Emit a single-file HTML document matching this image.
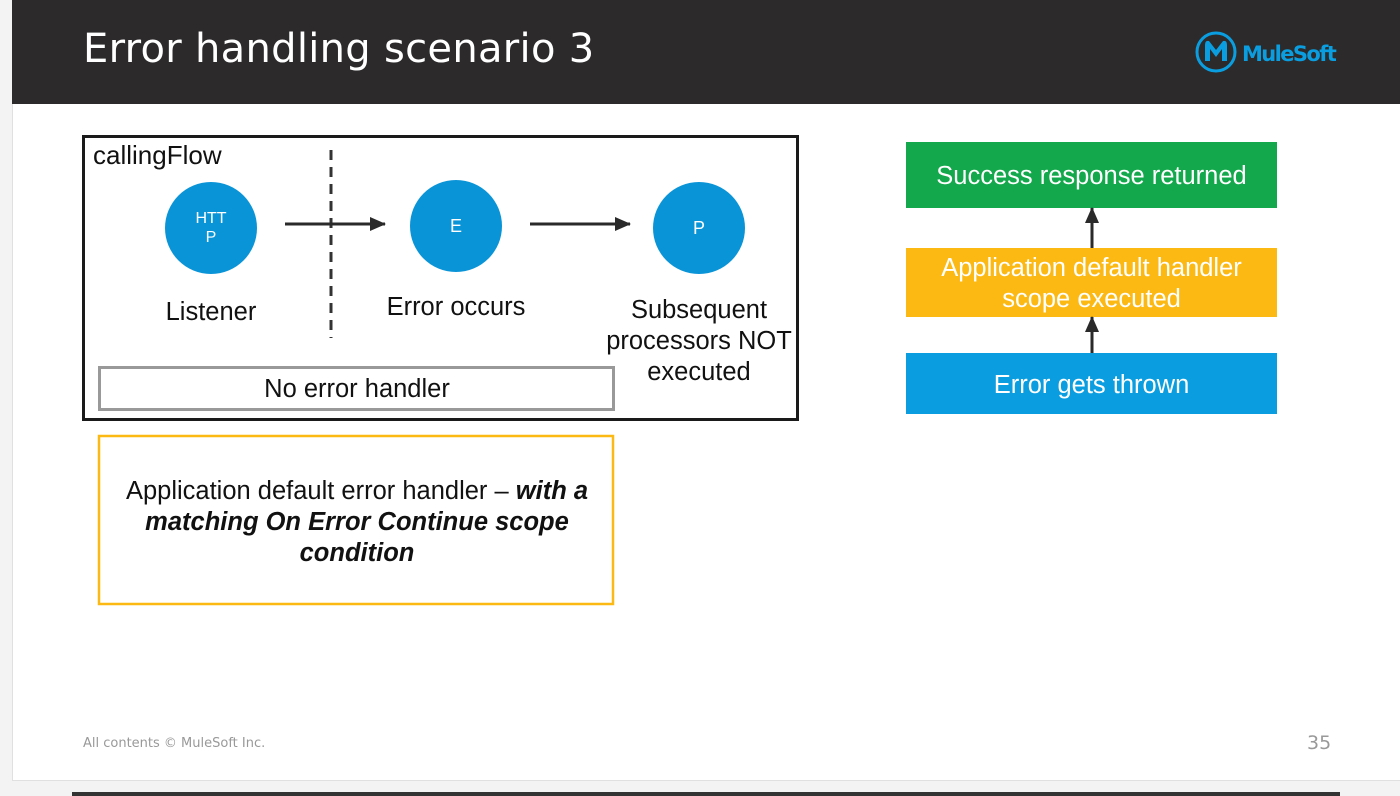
<!DOCTYPE html>
<html><head><meta charset="utf-8"><style>
*{margin:0;padding:0;box-sizing:border-box}
body{width:1400px;height:796px;background:#f3f3f3;position:relative;overflow:hidden;font-family:"Liberation Sans",Arial,sans-serif}
.slide{position:absolute;left:12px;top:0;width:1388px;height:781px;background:#fff;border-left:1px solid #e0e0e0;border-bottom:1px solid #e0e0e0}
.hdr{position:absolute;left:12px;top:0;width:1388px;height:104px;background:#2c2a2a}
.t{position:absolute;color:#fff;font-family:"DejaVu Sans",sans-serif;font-size:40px;left:83px;top:26px;letter-spacing:0.3px}
.abs{position:absolute}
.c{position:absolute;text-align:center}
</style></head><body>
<div class="slide"></div>
<div class="hdr"></div>
<div class="t">Error handling scenario 3</div>
<svg class="abs" style="left:1194px;top:30px" width="150" height="46" viewBox="0 0 150 46">
<circle cx="22" cy="22" r="19" fill="none" stroke="#0a9ee0" stroke-width="3"/>
<path d="M11 31 L11 15 Q11 10 15 11 L22 20 L29 11 Q33 10 33 15 L33 31 L28 31 L28 19 L22 27 L16 19 L16 31 Z" fill="#0a9ee0"/>
<text x="48" y="31" font-family="DejaVu Sans,sans-serif" font-size="21" font-weight="bold" fill="#0a9ee0" letter-spacing="-1.6">MuleSoft</text>
</svg>
<svg class="abs" style="left:0;top:0" width="1400" height="796">
<defs>
<marker id="b" markerWidth="16" markerHeight="14" refX="15" refY="7" orient="auto" markerUnits="userSpaceOnUse"><path d="M0 0 L16 7 L0 14Z" fill="#2a2a2a"/></marker></defs>
<rect x="83.5" y="136.5" width="714" height="283" fill="none" stroke="#1a1a1a" stroke-width="3"/>
<line x1="331" y1="150" x2="331" y2="338" stroke="#333" stroke-width="3" stroke-dasharray="10,7"/>
<circle cx="211" cy="228" r="46" fill="#0a94d8"/>
<circle cx="456" cy="226" r="46" fill="#0a94d8"/>
<circle cx="699" cy="228" r="46" fill="#0a94d8"/>
<line x1="285" y1="224" x2="385" y2="224" stroke="#2a2a2a" stroke-width="3" marker-end="url(#b)"/>
<line x1="530" y1="224" x2="630" y2="224" stroke="#2a2a2a" stroke-width="3" marker-end="url(#b)"/>
<rect x="99.5" y="367.5" width="514" height="42" fill="#fff" stroke="#999" stroke-width="3"/>
<rect x="99" y="436" width="514" height="168" fill="none" stroke="#fdb913" stroke-width="2.5"/>
<rect x="906" y="142" width="371" height="66" fill="#13a84b"/>
<rect x="906" y="248" width="371" height="69" fill="#fdb913"/>
<rect x="906" y="353" width="371" height="61" fill="#0a9ee0"/>
<line x1="1092" y1="248" x2="1092" y2="208" stroke="#2a2a2a" stroke-width="3" marker-end="url(#b)"/>
<line x1="1092" y1="353" x2="1092" y2="317" stroke="#2a2a2a" stroke-width="3" marker-end="url(#b)"/>
<rect x="72" y="792" width="1268" height="6" fill="#333"/>
</svg>
<div class="abs" style="left:93px;top:140px;font-size:26px;color:#111">callingFlow</div>
<div class="c" style="left:165px;top:209px;width:92px;color:#fff;font-size:16px;line-height:19px">HTT<br>P</div>
<div class="c" style="left:410px;top:216px;width:92px;color:#fff;font-size:18px">E</div>
<div class="c" style="left:653px;top:218px;width:92px;color:#fff;font-size:18px">P</div>
<div class="c" style="left:111px;top:298px;width:200px;font-size:25.5px;color:#111">Listener</div>
<div class="c" style="left:346px;top:293px;width:220px;font-size:25.5px;color:#111">Error occurs</div>
<div class="c" style="left:594px;top:295px;width:210px;font-size:25.5px;line-height:31px;color:#111">Subsequent processors NOT executed</div>
<div class="c" style="left:99px;top:375px;width:516px;font-size:25.5px;color:#111">No error handler</div>
<div class="c" style="left:105px;top:476px;width:504px;font-size:25.5px;line-height:31px;color:#111">Application default error handler – <b><i>with a matching On Error Continue scope condition</i></b></div>
<div class="c" style="left:896px;top:162px;width:391px;font-size:25.5px;color:#fff">Success response returned</div>
<div class="c" style="left:926px;top:253px;width:331px;font-size:25.5px;line-height:31px;color:#fff">Application default handler scope executed</div>
<div class="c" style="left:906px;top:371px;width:371px;font-size:25.5px;color:#fff">Error gets thrown</div>
<div class="abs" style="left:83px;top:736px;font-size:13px;color:#999;font-family:'DejaVu Sans',sans-serif">All contents © MuleSoft Inc.</div>
<div class="abs" style="left:1307px;top:732px;font-size:19px;color:#999;font-family:'DejaVu Sans',sans-serif">35</div>
</body></html>
